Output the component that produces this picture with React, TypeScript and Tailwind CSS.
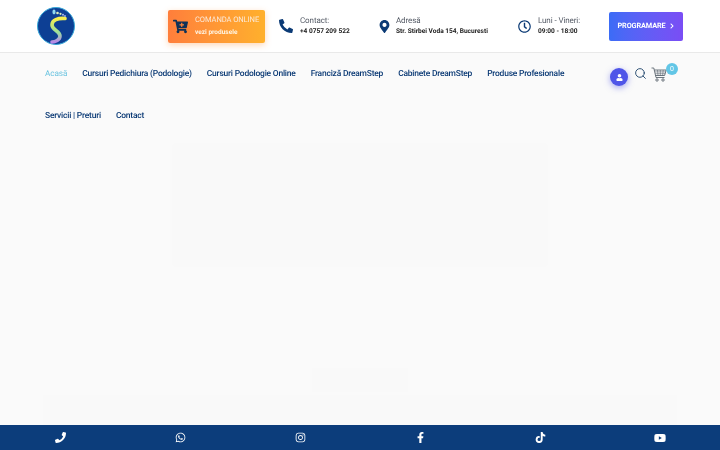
import { FaCartPlus, FaChevronRight, FaFacebookF, FaInstagram, FaMapMarkerAlt, FaPhoneAlt, FaRegClock, FaTiktok, FaUser, FaWhatsapp, FaYoutube } from 'react-icons/fa';
import { FiSearch } from 'react-icons/fi';
import type { ReactNode } from 'react';

const menuRowOne = ['Cursuri Pedichiura (Podologie)', 'Cursuri Podologie Online', 'Franciză DreamStep', 'Cabinete DreamStep', 'Produse Profesionale'];
const menuRowTwo = ['Servicii | Preturi', 'Contact'];

function Logo() {
    return (
        <svg width="38" height="38" viewBox="0 0 38 38" className="shrink-0">
            <defs>
                <linearGradient id="foot" x1="0" y1="0" x2="0" y2="1">
                    <stop offset="0" stopColor="#f5ef4e" />
                    <stop offset="0.6" stopColor="#9adf9c" />
                    <stop offset="1" stopColor="#b889e8" />
                </linearGradient>
            </defs>
            <circle cx="19" cy="19" r="18.5" fill="#0d3f94" stroke="#38a8d8" strokeWidth="1" />
            <path d="M28 11.5 C21 11 15 13 15 18 C15 23 23 24 23 29 C23 33 18 35 15 35" fill="none" stroke="url(#foot)" strokeWidth="3.6" strokeLinecap="round" />
            <ellipse cx="17" cy="5" rx="1.6" ry="2.4" fill="#8fd8ee" />
            <circle cx="20.5" cy="6" r="1.3" fill="#d8ecc0" />
            <circle cx="23.5" cy="6.8" r="1.1" fill="#d8ecc0" />
            <circle cx="26" cy="7.8" r="1" fill="#a9b9f0" />
            <circle cx="28" cy="9" r="0.9" fill="#a9b9f0" />
        </svg>
    );
}

function InfoBlock({ icon, label, value, className }: { icon: ReactNode; label: string; value: string; className: string }) {
    return (
        <div className={`flex items-center ${className}`}>
            {icon}
            <div className="flex flex-col">
                <span className="text-[8px] leading-[11px] tracking-[-0.1px] text-[#555b66]">{label}</span>
                <span className="text-[6.55px] leading-[11px] font-bold text-[#222] whitespace-nowrap">{value}</span>
            </div>
        </div>
    );
}

function MenuLink({ label }: { label: string }) {
    return <a className="text-[8.45px] leading-[12px] tracking-[-0.2px] font-medium text-[#0b3a75] whitespace-nowrap">{label}</a>;
}

function CartIcon() {
    return (
        <svg width="16" height="15" viewBox="0 0 16 15" fill="none" stroke="#4a5560" strokeWidth="0.8" className="shrink-0">
            <path d="M0.5 1 H2.8 L5 10.5 H13.5" />
            <path d="M3.4 3 H15.2 L13.6 8.5 H4.6" />
            <path d="M3.9 4.9 H14.6 M4.3 6.7 H14.1 M6.5 3 L7 8.5 M9.3 3 V8.5 M12.2 3 L11.6 8.5" strokeWidth="0.5" />
            <circle cx="6" cy="13" r="1.2" />
            <circle cx="12" cy="13" r="1.2" />
        </svg>
    );
}

export default function App() {
    const socials = [
        <FaPhoneAlt key="phone" size={11} className="-scale-x-100" />,
        <FaWhatsapp key="whatsapp" size={11} />,
        <FaInstagram key="instagram" size={11} />,
        <FaFacebookF key="facebook" size={11} />,
        <FaTiktok key="tiktok" size={11} />,
        <FaYoutube key="youtube" size={12} />,
    ];

    return (
        <div className="flex h-[450px] w-[720px] flex-col overflow-hidden bg-[#fafafa] font-['Roboto',sans-serif] blur-[0.3px] [text-rendering:geometricPrecision]">
            <header className="flex h-[53px] shrink-0 items-center border-b border-[#e9e9e9] bg-white">
                <div className="ml-[37px]"><Logo /></div>
                <div className="ml-[93px] flex h-[33px] w-[97px] shrink-0 items-center rounded-[2px] bg-gradient-to-r from-[#ff7e3b] to-[#ffb02c] pl-[5px] shadow-[0_2px_6px_rgba(255,140,50,0.35)]">
                    <FaCartPlus size={15} className="shrink-0 text-[#0f3157]" />
                    <div className="ml-[7px] flex flex-col">
                        <span className="text-[7.6px] leading-[12px] tracking-[-0.1px] text-[#fbe9d8] whitespace-nowrap">COMANDA ONLINE</span>
                        <span className="text-[6.5px] leading-[12px] font-bold text-[#fff5e4] whitespace-nowrap">vezi produsele</span>
                    </div>
                </div>
                <InfoBlock
                    className="ml-[14px] w-[99px] shrink-0"
                    icon={<FaPhoneAlt size={14} className="mr-[7px] shrink-0 text-[#0b3a75]" />}
                    label="Contact:"
                    value="+4 0757 209 522"
                />
                <InfoBlock
                    className="w-[140px] shrink-0"
                    icon={<FaMapMarkerAlt size={13} className="mr-[5px] shrink-0 text-[#0b3a75]" />}
                    label="Adresă"
                    value="Str. Stirbei Voda 154, Bucuresti"
                />
                <InfoBlock
                    className="w-[91px] shrink-0"
                    icon={<FaRegClock size={13} className="mr-[7px] shrink-0 text-[#0b3a75]" />}
                    label="Luni - Vineri:"
                    value="09:00 - 18:00"
                />
                <a className="flex h-[29px] w-[74px] shrink-0 items-center justify-center gap-[3px] rounded-[2px] bg-gradient-to-r from-[#3b6cf6] to-[#7a4df5] text-[7.3px] font-bold tracking-[-0.1px] text-white">
                    PROGRAMARE <FaChevronRight size={6} className="shrink-0" />
                </a>
            </header>

            <nav className="relative shrink-0 pl-[45px]">
                <div className="flex h-[41px] items-center gap-[15px]">
                    <a className="text-[8.2px] leading-[12px] tracking-[-0.1px] text-[#6cc4e0]">Acasă</a>
                    {menuRowOne.map((item) => <MenuLink key={item} label={item} />)}
                </div>
                <div className="flex h-[43px] items-center gap-[15px]">
                    {menuRowTwo.map((item) => <MenuLink key={item} label={item} />)}
                </div>
                <div className="absolute top-[10px] left-[610px] flex items-start">
                    <span className="mt-[5px] flex h-[18px] w-[18px] shrink-0 items-center justify-center rounded-full bg-[#4f55e8] text-white shadow-[0_2px_6px_rgba(79,85,232,0.5)]">
                        <FaUser size={7} />
                    </span>
                    <FiSearch size={13} strokeWidth={1.6} className="ml-[6px] mt-[4px] shrink-0 text-[#123a63]" />
                    <span className="ml-[4px] mt-[4px]"><CartIcon /></span>
                    <span className="ml-[-1px] flex h-[12px] w-[12px] shrink-0 items-center justify-center rounded-full bg-[#62c6e6] text-[7px] text-white">0</span>
                </div>
            </nav>

            <main className="flex flex-1 flex-col items-center">
                <div className="mt-[6px] h-[124px] w-[376px] shrink-0 rounded-[2px] bg-[#f9f9f9]" />
                <div className="mt-[101px] h-[24px] w-[96px] shrink-0 bg-[#f9f9f9]" />
                <div className="mt-[3px] h-[30px] w-[634px] shrink-0 bg-[#f9f9f9]" />
            </main>

            <footer className="grid h-[25px] shrink-0 grid-cols-6 items-center bg-[#0c3d7b] text-white">
                {socials.map((icon) => (
                    <span key={icon.key} className="flex justify-center">{icon}</span>
                ))}
            </footer>
        </div>
    );
}
